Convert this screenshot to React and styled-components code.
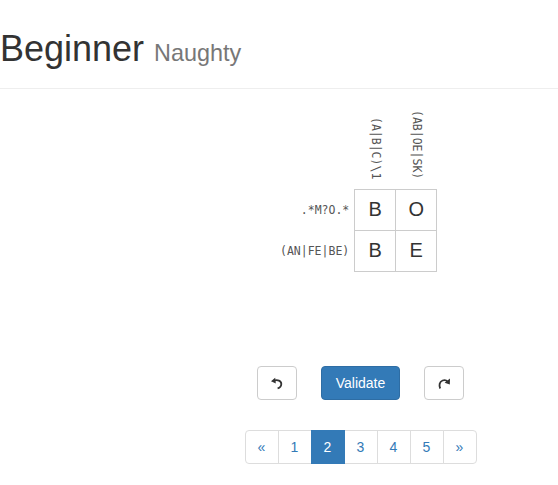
import React from "react";
import styled, { createGlobalStyle } from "styled-components";

const GlobalStyle = createGlobalStyle`
  body {
    margin: 0;
    font-family: "Liberation Sans", Arial, sans-serif;
    font-size: 14px;
    color: #333;
    background: #fff;
  }
`;

const PageHeader = styled.header`
  padding-bottom: 9px;
  border-bottom: 1px solid #eee;
`;

const Title = styled.h1`
  margin: 29px 0 10px;
  font-size: 36px;
  font-weight: 400;
  line-height: 1.1;
  color: #333;
`;

const Subtitle = styled.small`
  font-size: 65%;
  line-height: 1;
  color: #777;
`;

const Content = styled.main`
  padding-left: 163px;
`;

const Board = styled.table`
  border-collapse: collapse;
  margin: 19px 0 0 117px;
  font-family: "DejaVu Sans Mono", "Liberation Mono", monospace;
  font-size: 11.5px;
  color: #555;
`;

const ColHead = styled.th`
  height: 75px;
  padding: 0 0 6px;
  vertical-align: bottom;
  font-weight: 400;
  text-align: center;
`;

const Rotated = styled.span`
  display: inline-block;
  writing-mode: vertical-rl;
  white-space: nowrap;
  line-height: 1;
`;

const RowHead = styled.td`
  padding: 0 5px 0 0;
  text-align: right;
  white-space: nowrap;
  vertical-align: middle;
`;

const Cell = styled.td`
  width: 40px;
  height: 40px;
  padding: 0;
  border: 1px solid #ccc;
  text-align: center;
  vertical-align: middle;
  font-family: "Liberation Sans", Arial, sans-serif;
  font-size: 20px;
  color: #333;
`;

const Controls = styled.div`
  display: flex;
  justify-content: center;
  align-items: center;
  gap: 24px;
  margin-top: 94px;
`;

const IconButton = styled.button`
  display: flex;
  align-items: center;
  justify-content: center;
  width: 40px;
  height: 34px;
  padding: 0;
  border: 1px solid #ccc;
  border-radius: 4px;
  background: #fff;
  color: #333;
`;

const PrimaryButton = styled.button`
  height: 34px;
  padding: 6px 13.5px;
  border: 1px solid #2e6da4;
  border-radius: 4px;
  background: #337ab7;
  color: #fff;
  font-family: "Liberation Sans", Arial, sans-serif;
  font-size: 14px;
  line-height: 20px;
`;

const Pagination = styled.ul`
  display: flex;
  justify-content: center;
  list-style: none;
  margin: 30px 0 0;
  padding: 0;
`;

const PageItem = styled.li`
  width: 34px;
  height: 34px;
  box-sizing: border-box;
  margin-left: -1px;
  display: flex;
  align-items: center;
  justify-content: center;
  border: 1px solid ${(p) => (p.$active ? "#337ab7" : "#ddd")};
  background: ${(p) => (p.$active ? "#337ab7" : "#fff")};
  color: ${(p) => (p.$active ? "#fff" : "#337ab7")};
  position: ${(p) => (p.$active ? "relative" : "static")};
  font-size: 14px;

  &:first-child {
    margin-left: 0;
    border-radius: 4px 0 0 4px;
  }
  &:last-child {
    border-radius: 0 4px 4px 0;
  }
`;

const UndoIcon = () => (
  <svg width="14" height="14" viewBox="0 0 14 14">
    <path
      d="M4 4.6 C7.5 3.4 11.3 4.6 11.3 8 C11.3 10.3 9.6 11.8 7.6 12.3"
      fill="none"
      stroke="#333"
      strokeWidth="1.8"
    />
    <polygon points="1,5.2 5.2,1.8 5.8,7.6" fill="#333" />
  </svg>
);

const RedoIcon = () => (
  <svg width="14" height="14" viewBox="0 0 14 14">
    <path
      d="M3.2 12.5 C1.8 9.5 2.4 5.6 5.6 4.5 C7.8 3.8 9.6 4.4 10.6 5.6"
      fill="none"
      stroke="#333"
      strokeWidth="1.8"
    />
    <polygon points="13,2.6 12.8,8.6 7.6,6.8" fill="#333" />
  </svg>
);

const columns = ["(A|B|C)\\1", "(AB|OE|SK)"];
const rows = [
  { label: ".*M?O.*", cells: ["B", "O"] },
  { label: "(AN|FE|BE)", cells: ["B", "E"] },
];
const pages = ["«", "1", "2", "3", "4", "5", "»"];

function App() {
  return (
    <>
      <GlobalStyle />
      <PageHeader>
        <Title>
          Beginner <Subtitle>Naughty</Subtitle>
        </Title>
      </PageHeader>
      <Content>
        <Board>
          <thead>
            <tr>
              <th />
              {columns.map((c) => (
                <ColHead key={c}>
                  <Rotated>{c}</Rotated>
                </ColHead>
              ))}
            </tr>
          </thead>
          <tbody>
            {rows.map((r) => (
              <tr key={r.label}>
                <RowHead>{r.label}</RowHead>
                {r.cells.map((v, i) => (
                  <Cell key={i}>{v}</Cell>
                ))}
              </tr>
            ))}
          </tbody>
        </Board>
        <Controls>
          <IconButton>
            <UndoIcon />
          </IconButton>
          <PrimaryButton>Validate</PrimaryButton>
          <IconButton>
            <RedoIcon />
          </IconButton>
        </Controls>
        <Pagination>
          {pages.map((p) => (
            <PageItem key={p} $active={p === "2"}>
              {p}
            </PageItem>
          ))}
        </Pagination>
      </Content>
    </>
  );
}

export default App;
